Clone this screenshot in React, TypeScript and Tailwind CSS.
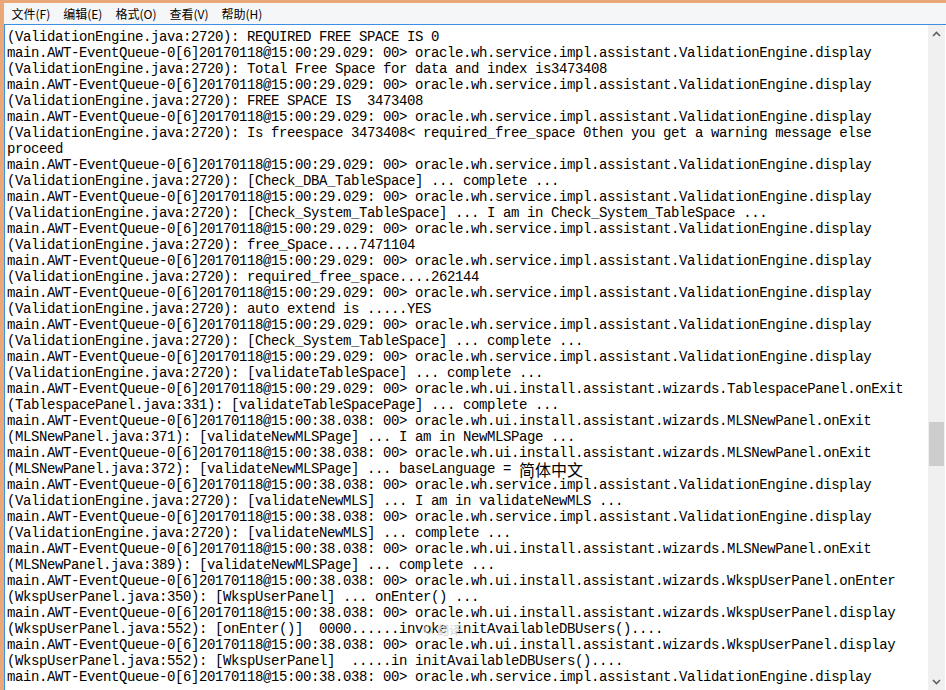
import { Search } from 'lucide-react';

const M29 = 'main.AWT-EventQueue-0[6]20170118@15:00:29.029: 00> ';
const M38 = 'main.AWT-EventQueue-0[6]20170118@15:00:38.038: 00> ';
const VE = '(ValidationEngine.java:2720): ';
const VED = 'oracle.wh.service.impl.assistant.ValidationEngine.display';
const WZ = 'oracle.wh.ui.install.assistant.wizards.';

const lines: string[] = [
  VE + 'REQUIRED FREE SPACE IS 0',
  M29 + VED,
  VE + 'Total Free Space for data and index is3473408',
  M29 + VED,
  VE + 'FREE SPACE IS  3473408',
  M29 + VED,
  VE + 'Is freespace 3473408< required_free_space 0then you get a warning message else',
  'proceed',
  M29 + VED,
  VE + '[Check_DBA_TableSpace] ... complete ...',
  M29 + VED,
  VE + '[Check_System_TableSpace] ... I am in Check_System_TableSpace ...',
  M29 + VED,
  VE + 'free_Space....7471104',
  M29 + VED,
  VE + 'required_free_space....262144',
  M29 + VED,
  VE + 'auto extend is .....YES',
  M29 + VED,
  VE + '[Check_System_TableSpace] ... complete ...',
  M29 + VED,
  VE + '[validateTableSpace] ... complete ...',
  M29 + WZ + 'TablespacePanel.onExit',
  '(TablespacePanel.java:331): [validateTableSpacePage] ... complete ...',
  M38 + WZ + 'MLSNewPanel.onExit',
  '(MLSNewPanel.java:371): [validateNewMLSPage] ... I am in NewMLSPage ...',
  M38 + WZ + 'MLSNewPanel.onExit',
  '__CJK__',
  M38 + VED,
  VE + '[validateNewMLS] ... I am in validateNewMLS ...',
  M38 + VED,
  VE + '[validateNewMLS] ... complete ...',
  M38 + WZ + 'MLSNewPanel.onExit',
  '(MLSNewPanel.java:389): [validateNewMLSPage] ... complete ...',
  M38 + WZ + 'WkspUserPanel.onEnter',
  '(WkspUserPanel.java:350): [WkspUserPanel] ... onEnter() ...',
  M38 + WZ + 'WkspUserPanel.display',
  '(WkspUserPanel.java:552): [onEnter()]  0000......invoke initAvailableDBUsers()....',
  M38 + WZ + 'WkspUserPanel.display',
  '(WkspUserPanel.java:552): [WkspUserPanel]  .....in initAvailableDBUsers()....',
  M38 + VED,
];

const menus = ['文件(F)', '编辑(E)', '格式(O)', '查看(V)', '帮助(H)'];

const Chevron = ({ down }: { down?: boolean }) => (
  <svg width="9" height="6" viewBox="0 0 9 6" className={down ? 'rotate-180' : ''}>
    <path d="M1 5 L4.5 1.5 L8 5" fill="none" stroke="#606060" strokeWidth="1.6" />
  </svg>
);

const lineCls = 'h-4 leading-4 whitespace-pre text-[14px] tracking-[-0.4px] text-black';
const mono = { fontFamily: '"Liberation Mono", monospace' };

const App = () => {
  return (
    <div className="w-[946px] h-[690px] overflow-hidden bg-[#eaa879] pt-[3px] pl-1 flex flex-col">
      {/* menu bar */}
      <div
        className="h-[21px] bg-[#f5f6f7] flex items-center pl-[7px] gap-[12px] text-[12px] text-black"
        style={{ fontFamily: '"Noto Sans CJK SC", sans-serif' }}
      >
        {menus.map((m) => (
          <span key={m} className="px-[0.5px] leading-none">
            {m}
          </span>
        ))}
      </div>

      {/* edit area */}
      <div className="flex-1 flex border-t border-l border-[#3d8fe1] bg-white min-h-0">
        <div className="relative flex-1 pl-[2px] pt-[4px] overflow-hidden">
          {lines.map((l, i) =>
            l === '__CJK__' ? (
              <div key={i} className={lineCls} style={mono}>
                (MLSNewPanel.java:372): [validateNewMLSPage] ... baseLanguage ={' '}
                <span
                  className="inline-block h-4 leading-4 align-top text-[16px] tracking-normal"
                  style={{ fontFamily: '"Noto Sans CJK SC", sans-serif' }}
                >
                  简体中文
                </span>
              </div>
            ) : (
              <div key={i} className={lineCls} style={mono}>
                {l}
              </div>
            )
          )}

          {/* faint translate watermark */}
          <div
            className="absolute left-[414px] top-[594px] h-[22px] w-[52px] flex items-center gap-[2px] px-1 text-[12px] text-[#d6d6d6] pointer-events-none"
            style={{ fontFamily: '"Noto Sans CJK SC", sans-serif' }}
          >
            <Search size={12} strokeWidth={2} color="#d6d6d6" />
            <span className="leading-none">翻译</span>
          </div>
        </div>

        {/* scrollbar */}
        <div className="w-[17px] bg-[#f0f0f0] flex flex-col mr-[1px]">
          <div className="h-[17px] flex items-center justify-center">
            <Chevron />
          </div>
          <div className="flex-1 pt-[380px] pl-[1px]">
            <div className="w-[15px] h-[44px] bg-[#cdcdcd]" />
          </div>
          <div className="h-[17px] flex items-center justify-center">
            <Chevron down />
          </div>
        </div>
      </div>
    </div>
  );
};

export default App;
